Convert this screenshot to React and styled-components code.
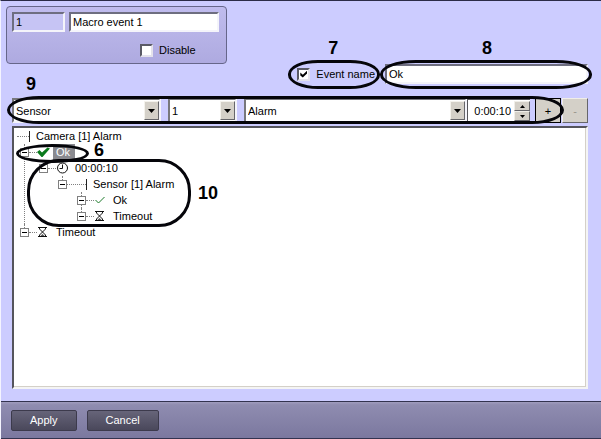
import { useState } from "react";
import styled, { createGlobalStyle } from "styled-components";

const GlobalStyle = createGlobalStyle`
  * {
    box-sizing: border-box;
  }

  body {
    margin: 0;
    background: #ccccff;
    color: #000;
    font-family: "Liberation Sans", Arial, sans-serif;
    font-size: 11px;
    line-height: 16px;
  }

  input, select, button {
    font: inherit;
    color: inherit;
    margin: 0;
    border-radius: 0;
  }
`;

const Page = styled.div`
  display: flex;
  flex-direction: column;
  min-height: 100vh;
  border-top: 1px solid #2b2b48;
  border-left: 1px solid #f4f4ff;
`;

const Main = styled.main`
  flex: 1;
  display: flex;
  flex-direction: column;
  padding: 5px 13px 12px 11px;
`;

const Card = styled.section`
  align-self: flex-start;
  width: 221px;
  margin-left: -6px;
  padding: 5px 7px 5px 5px;
  border: 1px solid #66668a;
  border-radius: 4px;
  background: linear-gradient(#c0bcee, #aeaae0);
`;

const CardRow = styled.div`
  display: grid;
  grid-template-columns: 53px 1fr;
  gap: 4px;
`;

const TextBox = styled.input`
  width: ${(p) => p.$width || "100%"};
  min-width: 0;
  height: 20px;
  padding: 0 2px;
  border: 2px solid;
  border-color: #6e6e80 #f4f4fa #f4f4fa #6e6e80;
  outline: none;
  background: ${(p) => (p.$dim ? "#c6c4f4" : "#fff")};
`;

const CheckLabel = styled.label`
  position: relative;
  display: flex;
  align-items: center;
  gap: 6px;
`;

const CardCheck = styled(CheckLabel)`
  margin: 10px 0 0 128px;
`;

const Check = styled.input`
  appearance: none;
  display: grid;
  place-items: center;
  width: 13px;
  height: 13px;
  border: 2px solid;
  border-color: #5a5a66 #e4e2ec #e4e2ec #5a5a66;
  background: #fff;

  &:checked::after {
    content: "";
    width: 7px;
    height: 7px;
    background: #000;
    clip-path: polygon(0 30%, 36% 62%, 100% 0, 100% 40%, 36% 100%, 0 70%);
  }
`;

const EventRow = styled.div`
  display: flex;
  justify-content: flex-end;
  align-items: center;
  gap: 10px;
`;

const Anchor = styled.div`
  position: relative;
  display: flex;
`;

const Filters = styled.div`
  position: relative;
  display: flex;
  height: 25px;
  margin: 14px 0 3px;
`;

const SelectBox = styled.div`
  display: grid;
  flex: ${(p) => p.$flex};
  align-items: center;
  margin-right: ${(p) => p.$gap};
  border: 2px solid;
  border-color: #77777c #f4f4fa #f4f4fa #77777c;
  background: #fff;
`;

const Select = styled.select`
  grid-area: 1 / 1;
  appearance: none;
  width: 100%;
  height: 20px;
  padding: 0 18px 0 2px;
  border: 0;
  outline: none;
  background: transparent;
`;

const Drop = styled.span`
  grid-area: 1 / 1;
  justify-self: end;
  display: grid;
  place-items: center;
  width: 15px;
  height: 19px;
  border: 1px solid;
  border-color: #f4f2ec #66666a #66666a #f4f2ec;
  background: #d4d0c8;
  pointer-events: none;
`;

const TimeBox = styled.div`
  display: flex;
  width: 63px;
  margin-right: 5px;
  border: solid #55555a;
  border-width: 2px 0 1px 1px;
  background: #fff;
`;

const TimeInput = styled.input`
  flex: 1;
  min-width: 0;
  padding: 0 3px 0 0;
  border: 0;
  outline: none;
  background: transparent;
  text-align: right;
`;

const Spin = styled.div`
  display: grid;
  grid-template-rows: 1fr 1fr;
  width: 16px;
  padding: 1px 0;
`;

const PushButton = styled.button`
  display: grid;
  place-items: center;
  width: ${(p) => p.$width};
  padding: 0;
  border: 1px solid;
  border-color: #f0eee8 #66666a #66666a #f0eee8;
  background: #d4d0c8;
  color: ${(p) => (p.disabled ? "#99958c" : "#000")};
`;

const AddButton = styled(PushButton)`
  margin-right: 1px;
  outline: 1px solid #000;
  outline-offset: -1px;
`;

const Tree = styled.div`
  flex: 1;
  min-height: 180px;
  padding-left: 3px;
  border: 2px solid;
  border-color: #55555c #f4f4f4 #f4f4f4 #55555c;
  background: #fff;
  box-shadow: inset -1px -1px #d4d0c8;
`;

const Branch = styled.ul`
  margin: 0 0 0 ${(p) => p.$indent};
  padding: 0;
  list-style: none;
`;

const Node = styled.li`
  position: relative;

  &::before {
    content: "";
    position: absolute;
    top: 0;
    left: 4px;
    height: 100%;
    border-left: 1px dotted #808080;
  }

  &:last-child::before {
    height: 8px;
  }
`;

const NodeRow = styled.div`
  position: relative;
  display: flex;
  align-items: center;
  height: 16px;
`;

const Toggle = styled.button`
  display: grid;
  place-items: center;
  width: 9px;
  height: 9px;
  padding: 0;
  border: 1px solid #808080;
  background: #fff;

  &::after {
    content: "";
    width: 5px;
    height: 1px;
    background: #000;
  }
`;

const Dash = styled.span`
  width: ${(p) => p.$width};
  border-top: 1px dotted #808080;
`;

const Bar = styled.span`
  width: 1px;
  height: 11px;
  margin-right: 3px;
  background: #222;
`;

const Glyph = styled.svg`
  width: 14px;
  height: 14px;
  margin-right: 2px;
`;

const NodeText = styled.span`
  padding: ${(p) => (p.$selected ? "0 5px 0 3px" : "0 3px")};
  white-space: nowrap;
  background: ${(p) => (p.$selected ? "#8a8a90" : "transparent")};
  color: ${(p) => (p.$selected ? "#fff" : "#000")};
`;

const Footer = styled.footer`
  display: flex;
  align-items: center;
  gap: 10px;
  height: 38px;
  padding: 0 10px;
  border: solid #33334f;
  border-width: 1px 0;
  background: linear-gradient(#a09cbe, #8f8cb0 8%, #7b789f);
`;

const FooterButton = styled.button`
  height: 21px;
  padding: 0 18px;
  border: 1px solid #3c3a4c;
  border-radius: 2px;
  background: linear-gradient(#666479, #4a485b);
  color: #fff;
`;

/* callouts drawn over the form */
const Ring = styled.span`
  position: absolute;
  top: ${(p) => p.$top};
  left: ${(p) => p.$left};
  right: ${(p) => p.$right};
  width: ${(p) => p.$width};
  height: ${(p) => p.$height};
  border: 3px solid #05050a;
  border-radius: ${(p) => p.$radius};
  pointer-events: none;
  z-index: 1;
`;

const Callout = styled.span`
  position: absolute;
  top: ${(p) => p.$top};
  left: ${(p) => p.$left};
  font-size: 18px;
  line-height: 14px;
  font-weight: 700;
  pointer-events: none;
  z-index: 1;
`;

const Arrow = ({ up, small }) => (
  <svg width={small ? 5 : 7} height={small ? 3 : 4} viewBox="0 0 7 4" aria-hidden="true">
    <path d={up ? "M0 4L3.5 0L7 4Z" : "M0 0H7L3.5 4Z"} fill="#000" />
  </svg>
);

const BoldTick = () => (
  <Glyph viewBox="0 0 14 14">
    <path d="M0 7L2.5 5L5 7.5L10.5 2.5L13 3.5L5.5 12H4.5Z" fill="#0a7a1c" />
  </Glyph>
);

const ThinTick = () => (
  <Glyph viewBox="0 0 14 14">
    <path d="M1.5 7L4.5 10L10.5 4" fill="none" stroke="#1c7a2a" />
  </Glyph>
);

const Clock = () => (
  <Glyph viewBox="0 0 14 14">
    <circle cx="6.5" cy="7" r="5" fill="#fff" stroke="#111" />
    <path d="M6.5 3.5V7.5H3.5" fill="none" stroke="#111" />
  </Glyph>
);

const Hourglass = () => (
  <Glyph viewBox="0 0 14 14">
    <path d="M1 2.5H10M1 11.5H10M2.5 3V4L8.5 10V11M8.5 3V4L2.5 10V11" fill="none" stroke="#111" />
    <path d="M3.5 11L5.5 9L7.5 11Z" fill="#555" />
  </Glyph>
);

const Dropdown = ({ label, value, flex, gap }) => (
  <SelectBox $flex={flex} $gap={gap}>
    <Select aria-label={label} defaultValue={value}>
      <option>{value}</option>
    </Select>
    <Drop>
      <Arrow />
    </Drop>
  </SelectBox>
);

const TreeRow = ({ icon, text, selected, children }) => (
  <NodeRow>
    <Toggle type="button" aria-label={`Collapse ${text}`} />
    <Dash $width={icon ? "8px" : "19px"} />
    {icon || <Bar />}
    <NodeText $selected={selected}>{text}</NodeText>
    {children}
  </NodeRow>
);

const App = () => {
  const [named, setNamed] = useState(true);

  return (
    <Page>
      <GlobalStyle />
      <Main>
        <Card>
          <CardRow>
            <TextBox $dim aria-label="Number" defaultValue="1" readOnly />
            <TextBox aria-label="Name" defaultValue="Macro event 1" />
          </CardRow>
          <CardCheck>
            <Check type="checkbox" />
            Disable
          </CardCheck>
        </Card>

        <EventRow>
          <CheckLabel>
            <Check type="checkbox" checked={named} onChange={() => setNamed(!named)} />
            Event name
            <Ring $top="-6px" $left="-9px" $right="-5px" $height="29px" $radius="30px / 14px" />
            <Callout $top="-25px" $left="31px">7</Callout>
          </CheckLabel>
          <Anchor>
            <TextBox $width="203px" aria-label="Event name" defaultValue="Ok" />
            <Ring $top="-4px" $left="-5px" $right="-4px" $height="29px" $radius="36px / 14px" />
            <Callout $top="-23px" $left="97px">8</Callout>
          </Anchor>
        </EventRow>

        <Filters>
          <Dropdown label="Object type" value="Sensor" flex="0 0 149px" gap="7px" />
          <Dropdown label="Object number" value="1" flex="0 0 69px" gap="7px" />
          <Dropdown label="Event" value="Alarm" flex="1" gap="0" />
          <TimeBox>
            <TimeInput aria-label="Delay" defaultValue="0:00:10" />
            <Spin>
              <PushButton type="button" aria-label="Increase" $width="16px"><Arrow up small /></PushButton>
              <PushButton type="button" aria-label="Decrease" $width="16px"><Arrow small /></PushButton>
            </Spin>
          </TimeBox>
          <AddButton type="button" $width="26px">+</AddButton>
          <PushButton type="button" $width="26px" disabled>-</PushButton>
          <Ring $top="-2px" $left="-5px" $right="24px" $height="28px" $radius="32px / 14px" />
          <Callout $top="-21px" $left="14px">9</Callout>
        </Filters>

        <Tree>
          <NodeRow>
            <Dash $width="12px" />
            <Bar />
            <NodeText>Camera [1] Alarm</NodeText>
          </NodeRow>
          <Branch $indent="3px">
            <Node>
              <TreeRow icon={<BoldTick />} text="Ok" selected>
                <Ring $top="0" $left="-4px" $width="73px" $height="19px" $radius="50%" />
                <Callout $top="-1px" $left="74px">6</Callout>
              </TreeRow>
              <Branch $indent="19px">
                <Node>
                  <TreeRow icon={<Clock />} text="00:00:10" />
                  <Branch $indent="19px">
                    <Node>
                      <TreeRow text="Sensor [1] Alarm" />
                      <Branch $indent="19px">
                        <Node><TreeRow icon={<ThinTick />} text="Ok" /></Node>
                        <Node><TreeRow icon={<Hourglass />} text="Timeout" /></Node>
                      </Branch>
                    </Node>
                  </Branch>
                </Node>
              </Branch>
              <Ring $top="15px" $left="7px" $width="164px" $height="68px" $radius="32px" />
              <Callout $top="42px" $left="178px">10</Callout>
            </Node>
            <Node><TreeRow icon={<Hourglass />} text="Timeout" /></Node>
          </Branch>
        </Tree>
      </Main>
      <Footer>
        <FooterButton type="button">Apply</FooterButton>
        <FooterButton type="button">Cancel</FooterButton>
      </Footer>
    </Page>
  );
};

export default App;
